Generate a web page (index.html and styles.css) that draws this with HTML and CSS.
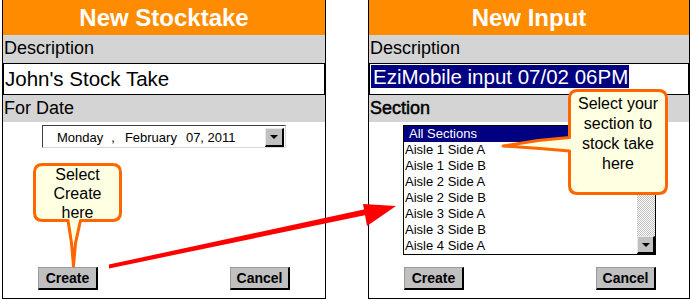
FILE: index.html
```html
<!DOCTYPE html>
<html>
<head>
<meta charset="utf-8">
<link rel="stylesheet" href="styles.css">
</head>
<body>
<div class="page">
  <section class="panel panel-left">
    <header class="title">New Stocktake</header>
    <div class="label">Description</div>
    <div class="field">John's Stock Take</div>
    <div class="label label2">For Date</div>
    <div class="body">
      <div class="datepicker">
        <span class="d-day">Monday</span><span class="d-comma">,</span><span class="d-month">February</span><span class="d-rest">07, 2011</span>
        <span class="dd-btn"><span class="tri"></span></span>
      </div>
      <div class="buttons">
        <button class="btn">Create</button>
        <button class="btn">Cancel</button>
      </div>
    </div>
  </section>

  <section class="panel panel-right">
    <header class="title">New Input</header>
    <div class="label">Description</div>
    <div class="field"><span class="selected-text">EziMobile input 07/02 06PM</span></div>
    <div class="label label2 label-focus">Section</div>
    <div class="body">
      <div class="listbox">
        <ul class="items">
          <li class="item item-selected">All Sections</li>
          <li class="item">Aisle 1 Side A</li>
          <li class="item">Aisle 1 Side B</li>
          <li class="item">Aisle 2 Side A</li>
          <li class="item">Aisle 2 Side B</li>
          <li class="item">Aisle 3 Side A</li>
          <li class="item">Aisle 3 Side B</li>
          <li class="item">Aisle 4 Side A</li>
        </ul>
        <div class="scrollbar">
          <div class="track"></div>
          <div class="sb-btn"><span class="tri"></span></div>
        </div>
      </div>
      <div class="buttons">
        <button class="btn">Create</button>
        <button class="btn">Cancel</button>
      </div>
    </div>
  </section>

  <svg class="overlay" width="690" height="300" viewBox="0 0 690 300">
    <path class="callout-shape" d="M 42.5 164.5 H 112.5 Q 120.5 164.5 120.5 172.5 V 212.5 Q 120.5 220.5 112.5 220.5 H 80.5 L 75.5 243 L 73.5 266 L 71.5 243 L 68 220.5 H 42.5 Q 34.5 220.5 34.5 212.5 V 172.5 Q 34.5 164.5 42.5 164.5 Z"/>
    <path class="callout-shape" d="M 577.5 90.5 H 658.5 Q 666.5 90.5 666.5 98.5 V 185.5 Q 666.5 193.5 658.5 193.5 H 577.5 Q 569.5 193.5 569.5 185.5 V 151 L 540 148.5 L 503 146 L 538 140.5 L 569.5 137.5 V 98.5 Q 569.5 90.5 577.5 90.5 Z"/>
    <polygon class="arrow" points="109,264.5 366,209 366,215 109,268.5"/>
    <polygon class="arrow" points="363,204 396,206 367,226"/>
  </svg>
  <div class="callout-text callout-left">Select<br>Create<br>here</div>
  <div class="callout-text callout-right">Select your<br>section to<br>stock take<br>here</div>
</div>
</body>
</html>
```
FILE: styles.css
```css
* { box-sizing: border-box; }
html, body { margin: 0; padding: 0; background: #fff; }
body { font-family: "Liberation Sans", Arial, sans-serif; color: #000; }

.page {
  position: relative;
  width: 690px;
  height: 300px;
  display: flex;
  align-items: flex-start;
  background: #fff;
}

.panel {
  height: 299px;
  border: 1px solid #000;
  border-top: none;
  display: flex;
  flex-direction: column;
  background: #fff;
}
.panel-left { margin-left: 2px; width: 324px; }
.panel-right { margin-left: 42px; width: 322px; }

.title {
  height: 35px;
  line-height: 35px;
  background: #ff8c00;
  color: #fff;
  font-weight: bold;
  font-size: 24px;
  text-align: center;
}

.label {
  height: 28px;
  line-height: 27px;
  background: #d4d4d4;
  font-size: 18px;
  padding-left: 1px;
}
.label2 { height: 27px; line-height: 26px; }
.label-focus { -webkit-text-stroke: 0.5px #000; }

.field {
  height: 32px;
  border: 1px solid #000;
  font-size: 20.5px;
  line-height: 29px;
  padding-left: 1px;
  white-space: nowrap;
}
.selected-text {
  display: inline-block;
  background: #000080;
  color: #fff;
  line-height: 23px;
  height: 23px;
  padding: 0 1px 0 2px;
  margin-top: 1px;
  vertical-align: top;
}

.body {
  flex: 1;
  display: flex;
  flex-direction: column;
}

.datepicker {
  margin: 3px 0 0 39px;
  width: 244px;
  height: 23px;
  display: flex;
  align-items: center;
  border-top: 1px solid #404040;
  border-left: 1px solid #404040;
  border-right: 1px solid #d8d8d8;
  border-bottom: 1px solid #d8d8d8;
  font-size: 13px;
  padding-left: 14px;
  padding-top: 1px;
  white-space: nowrap;
}
.d-comma { margin-left: 8px; }
.d-month { margin-left: 10px; }
.d-rest { margin-left: 9px; }

.dd-btn {
  margin-left: auto;
  margin-right: 1px;
  width: 19px;
  height: 19px;
  background: #c0c0c0;
  border-top: 1px solid #e8e8e8;
  border-left: 1px solid #e8e8e8;
  border-right: 2px solid #000;
  border-bottom: 2px solid #000;
  display: flex;
  align-items: center;
  justify-content: center;
}
.tri {
  width: 0;
  height: 0;
  border-left: 4px solid transparent;
  border-right: 4px solid transparent;
  border-top: 4px solid #000;
}

.buttons {
  margin-top: auto;
  padding: 0 0 8px 35px;
  display: flex;
  gap: 132px;
}
.btn {
  width: 60px;
  height: 23px;
  padding: 0;
  margin: 0;
  background: #c0c0c0;
  border-top: 1px solid #9a9a9a;
  border-left: 1px solid #9a9a9a;
  border-right: 2px solid #000;
  border-bottom: 2px solid #000;
  font-family: "Liberation Sans", Arial, sans-serif;
  font-weight: bold;
  font-size: 14px;
  line-height: 19px;
  color: #000;
}

.listbox {
  margin: 3px 0 0 34px;
  width: 253px;
  height: 130px;
  border: 1px solid #000;
  display: flex;
}
.items {
  list-style: none;
  margin: 0;
  padding: 0;
  flex: 1;
  font-size: 13px;
}
.item {
  height: 16px;
  line-height: 16px;
  padding-left: 1px;
  white-space: nowrap;
}
.item-selected {
  background: #000080;
  color: #fff;
  padding-left: 5px;
}
.scrollbar {
  width: 18px;
  display: flex;
  flex-direction: column;
}
.track {
  flex: 1;
  background-color: #fff;
  background-image: repeating-conic-gradient(#c0c0c0 0 25%, #fff 0 50%);
  background-size: 2px 2px;
}
.sb-btn {
  height: 18px;
  background: #c0c0c0;
  border-top: 1px solid #e8e8e8;
  border-left: 1px solid #e8e8e8;
  border-right: 2px solid #000;
  border-bottom: 2px solid #000;
  display: flex;
  align-items: center;
  justify-content: center;
}

.overlay {
  position: absolute;
  top: 0;
  left: 0;
  pointer-events: none;
}
.callout-shape {
  fill: #ffffe1;
  stroke: #ff6600;
  stroke-width: 3;
  stroke-linejoin: round;
}
.arrow { fill: #ff0000; }

.callout-text {
  position: absolute;
  text-align: center;
  font-size: 16px;
  color: #000;
}
.callout-left {
  left: 33px;
  top: 163px;
  width: 89px;
  line-height: 19px;
  padding-top: 2px;
}
.callout-right {
  left: 568px;
  top: 89px;
  width: 100px;
  line-height: 20px;
  padding-top: 5px;
}
```
